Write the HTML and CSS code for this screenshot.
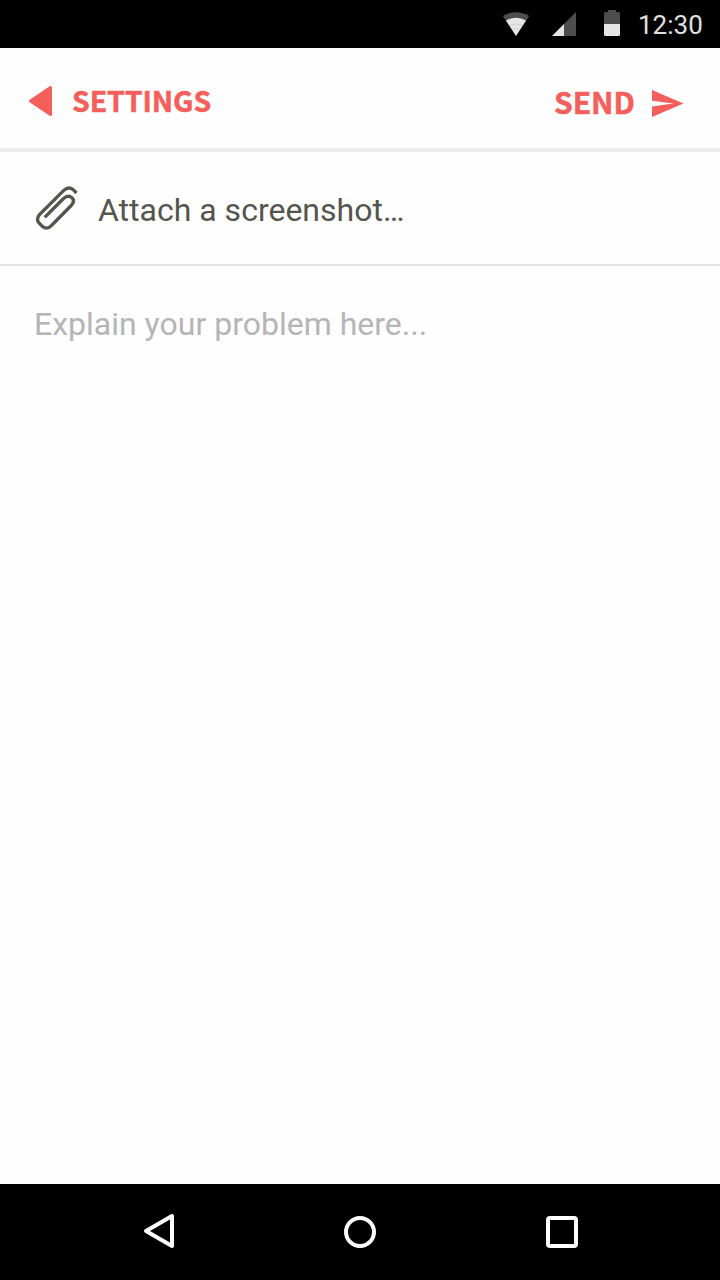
FILE: index.html
```html
<!DOCTYPE html>
<html lang="en">
<head>
<meta charset="utf-8">
<title>Report a problem</title>
<link rel="stylesheet" href="styles.css">
</head>
<body>
<div class="screen">
  <div class="status">
    <svg class="wifi" width="28" height="26" viewBox="0 0 28 26"><path d="M.8 6Q14-1.500 27.200 6L14 26Z" fill="#4d4d4d"/><path d="M4 10.500Q14 5 24 10.500L14 26Z" fill="#e6e6e6"/><path d="M7.500 15.500Q14 12.500 20.500 15.500M10 19.300Q14 17.800 18 19.300" fill="none" stroke="#c4c4c4" stroke-width=".7"/></svg>
    <svg class="signal" width="24" height="24" viewBox="0 0 24 24"><path d="M24 0V24H0Z" fill="#4d4d4d"/><path d="M12 12V24H0Z" fill="#e6e6e6"/></svg>
    <svg class="battery" width="16" height="26" viewBox="0 0 16 26"><path d="M4 0H12V2H14.500Q16 2 16 3.500V14H0V3.500Q0 2 1.500 2H4Z" fill="#4d4d4d"/><path d="M0 14H16V24.500Q16 26 14.500 26H1.500Q0 26 0 24.500Z" fill="#e6e6e6"/></svg>
    <span class="clock">12:30</span>
  </div>
  <header class="toolbar">
    <a class="action back"><svg width="24" height="32" viewBox="0 0 24 32"><path d="M2.500 16 22.500 2.500V29.500Z" fill="#f45f5c" stroke="#f45f5c" stroke-width="3" stroke-linejoin="round"/></svg><span>SETTINGS</span></a>
    <a class="action send"><span>SEND</span><svg width="32" height="28" viewBox="0 0 32 28"><path d="M0 0 31.500 13.500 0 27V16.500L21.500 13.500 0 10.800Z" fill="#f45f5c"/></svg></a>
  </header>
  <div class="attach">
    <svg width="44" height="46" viewBox="0 0 44 46"><path d="M41.500 8 38.500 4.900Q33.800 1 29 5.200L4.500 29.700Q.8 34 4 38L7.500 41.500Q11.500 45 16 41L36.200 20.500Q40.300 16 37 12.800 33 9.500 28.500 13.500L9.700 32.300" fill="none" stroke="#55554d" stroke-width="3.300"/></svg>
    <span>Attach a screenshot…</span>
  </div>
  <main class="message">Explain your problem here...</main>
  <nav class="nav">
    <svg width="32" height="36" viewBox="0 0 32 36"><path d="M3 18 29 3V33Z" fill="none" stroke="#fff" stroke-width="4" stroke-linejoin="round"/></svg>
    <span class="home"></span>
    <span class="recent"></span>
  </nav>
</div>
</body>
</html>
```
FILE: styles.css
```css
* { box-sizing: border-box; }
body { margin: 0; font-family: Roboto, sans-serif; }
svg { display: block; flex: none; }
.screen { width: 720px; height: 1280px; display: flex; flex-direction: column; background: #fefefe; }
.status { height: 48px; background: #000; display: flex; align-items: flex-start; padding: 10px 17px 0 502px; }
.signal { margin: 2px 0 0 22px; }
.battery { margin-left: 28px; }
.clock { margin-left: 18px; font-size: 26px; line-height: 30px; color: #e0e0e0; white-space: nowrap; }
.toolbar { height: 104px; border-bottom: 4px solid #ededed; display: flex; justify-content: space-between; padding: 0 36px 0 28px; }
.action { display: flex; align-items: center; height: 106px; color: #f45f5c; font-family: "Noto Sans CJK JP", sans-serif; font-weight: 700; white-space: nowrap; -webkit-text-stroke: 0.5px #f45f5c; }
.action span { line-height: 40px; padding-bottom: 2px; }
.back { gap: 20px; font-size: 28.5px; letter-spacing: -0.1px; }
.send { gap: 17px; font-size: 30px; height: 112px; }
.send span { padding-bottom: 6px; }
.attach { height: 114px; border-bottom: 2px solid #e2e2e2; display: flex; align-items: center; padding: 0 35px; gap: 19px; font-size: 32px; color: #55554d; }
.attach span { padding-top: 4px; }
.message { flex: 1; padding: 39px 34px; font-size: 32px; line-height: 38px; color: #b5b5b5; }
.nav { height: 96px; background: #000; display: flex; padding: 29px 142px 0 143px; }
.home, .recent { width: 32px; height: 32px; margin-top: 3px; border: 4px solid #fff; }
.home { border-radius: 50%; margin-left: 169px; }
.recent { border-radius: 4px; margin-left: 170px; }
```
